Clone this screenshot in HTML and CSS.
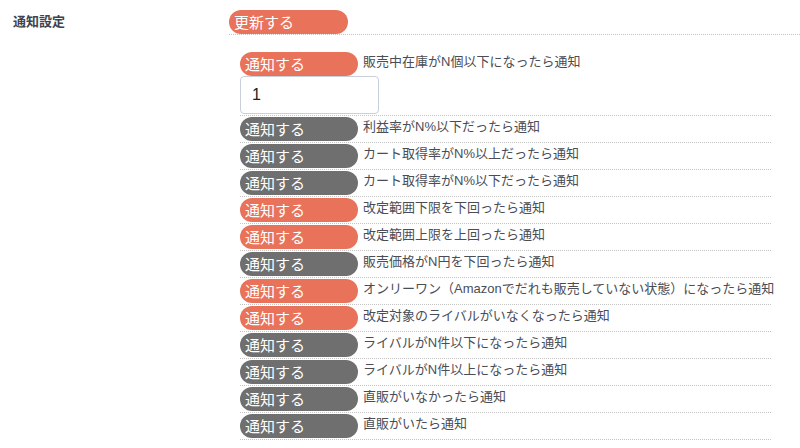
FILE: index.html
```html
<!DOCTYPE html>
<html lang="ja">
<head>
    <meta charset="UTF-8">
    <title>通知設定</title>
    <link rel="stylesheet" href="styles.css">
</head>
<body>
    <div class="settings">
        <div class="settings-label">通知設定</div>
        <div class="settings-body">
            <div class="update-row">
                <button class="pill on">更新する</button>
            </div>
            <ul class="notify-list">
                <li class="notify-item">
                    <div class="notify-head">
                        <button class="pill on">通知する</button>
                        <span class="notify-text">販売中在庫がN個以下になったら通知</span>
                    </div>
                    <input class="notify-input" type="text" value="1">
                </li>
                <li class="notify-item">
                    <div class="notify-head">
                        <button class="pill">通知する</button>
                        <span class="notify-text">利益率がN%以下だったら通知</span>
                    </div>
                </li>
                <li class="notify-item">
                    <div class="notify-head">
                        <button class="pill">通知する</button>
                        <span class="notify-text">カート取得率がN%以上だったら通知</span>
                    </div>
                </li>
                <li class="notify-item">
                    <div class="notify-head">
                        <button class="pill">通知する</button>
                        <span class="notify-text">カート取得率がN%以下だったら通知</span>
                    </div>
                </li>
                <li class="notify-item">
                    <div class="notify-head">
                        <button class="pill on">通知する</button>
                        <span class="notify-text">改定範囲下限を下回ったら通知</span>
                    </div>
                </li>
                <li class="notify-item">
                    <div class="notify-head">
                        <button class="pill on">通知する</button>
                        <span class="notify-text">改定範囲上限を上回ったら通知</span>
                    </div>
                </li>
                <li class="notify-item">
                    <div class="notify-head">
                        <button class="pill">通知する</button>
                        <span class="notify-text">販売価格がN円を下回ったら通知</span>
                    </div>
                </li>
                <li class="notify-item">
                    <div class="notify-head">
                        <button class="pill on">通知する</button>
                        <span class="notify-text">オンリーワン（Amazonでだれも販売していない状態）になったら通知</span>
                    </div>
                </li>
                <li class="notify-item">
                    <div class="notify-head">
                        <button class="pill on">通知する</button>
                        <span class="notify-text">改定対象のライバルがいなくなったら通知</span>
                    </div>
                </li>
                <li class="notify-item">
                    <div class="notify-head">
                        <button class="pill">通知する</button>
                        <span class="notify-text">ライバルがN件以下になったら通知</span>
                    </div>
                </li>
                <li class="notify-item">
                    <div class="notify-head">
                        <button class="pill">通知する</button>
                        <span class="notify-text">ライバルがN件以上になったら通知</span>
                    </div>
                </li>
                <li class="notify-item">
                    <div class="notify-head">
                        <button class="pill">通知する</button>
                        <span class="notify-text">直販がいなかったら通知</span>
                    </div>
                </li>
                <li class="notify-item">
                    <div class="notify-head">
                        <button class="pill">通知する</button>
                        <span class="notify-text">直販がいたら通知</span>
                    </div>
                </li>
            </ul>
        </div>
    </div>
</body>
</html>
```

FILE: styles.css
```css
body {
    margin: 0;
    background: #fff;
    font-family: "Liberation Sans", "Noto Sans CJK JP", sans-serif;
    color: #4a4d55;
}
.settings {
    display: flex;
}
.settings-label {
    width: 216px;
    padding: 11px 0 0 13px;
    font-size: 13px;
    font-weight: bold;
    color: #3d4350;
}
.settings-body {
    flex: 1;
}
.update-row {
    padding-top: 10px;
    border-bottom: 1px dotted #c4c4c4;
    line-height: 0;
}
.pill {
    display: inline-block;
    flex-shrink: 0;
    width: 118px;
    height: 24px;
    padding: 1px 0 0 5px;
    border: none;
    border-radius: 12px;
    background: #6f6f6f;
    color: #fff;
    font-family: inherit;
    font-size: 15px;
    line-height: 23px;
    text-align: left;
    cursor: pointer;
}
.pill.on {
    background: #e9735a;
}
.update-row .pill {
    width: 119px;
}
.notify-list {
    list-style: none;
    margin: 16px 0 0 11px;
    padding: 0;
    width: 531px;
}
.notify-item {
    padding: 1px 0;
    border-bottom: 1px dotted #c4c4c4;
}
.notify-head {
    display: flex;
    align-items: flex-start;
    gap: 5px;
}
.notify-text {
    font-size: 13px;
    line-height: 20px;
    white-space: nowrap;
}
.notify-input {
    display: block;
    box-sizing: border-box;
    width: 139px;
    height: 38px;
    margin: 0;
    padding: 0 11px;
    border: 1px solid #c8d0dc;
    border-radius: 4px;
    font-family: inherit;
    font-size: 16px;
    color: #222;
}
```
